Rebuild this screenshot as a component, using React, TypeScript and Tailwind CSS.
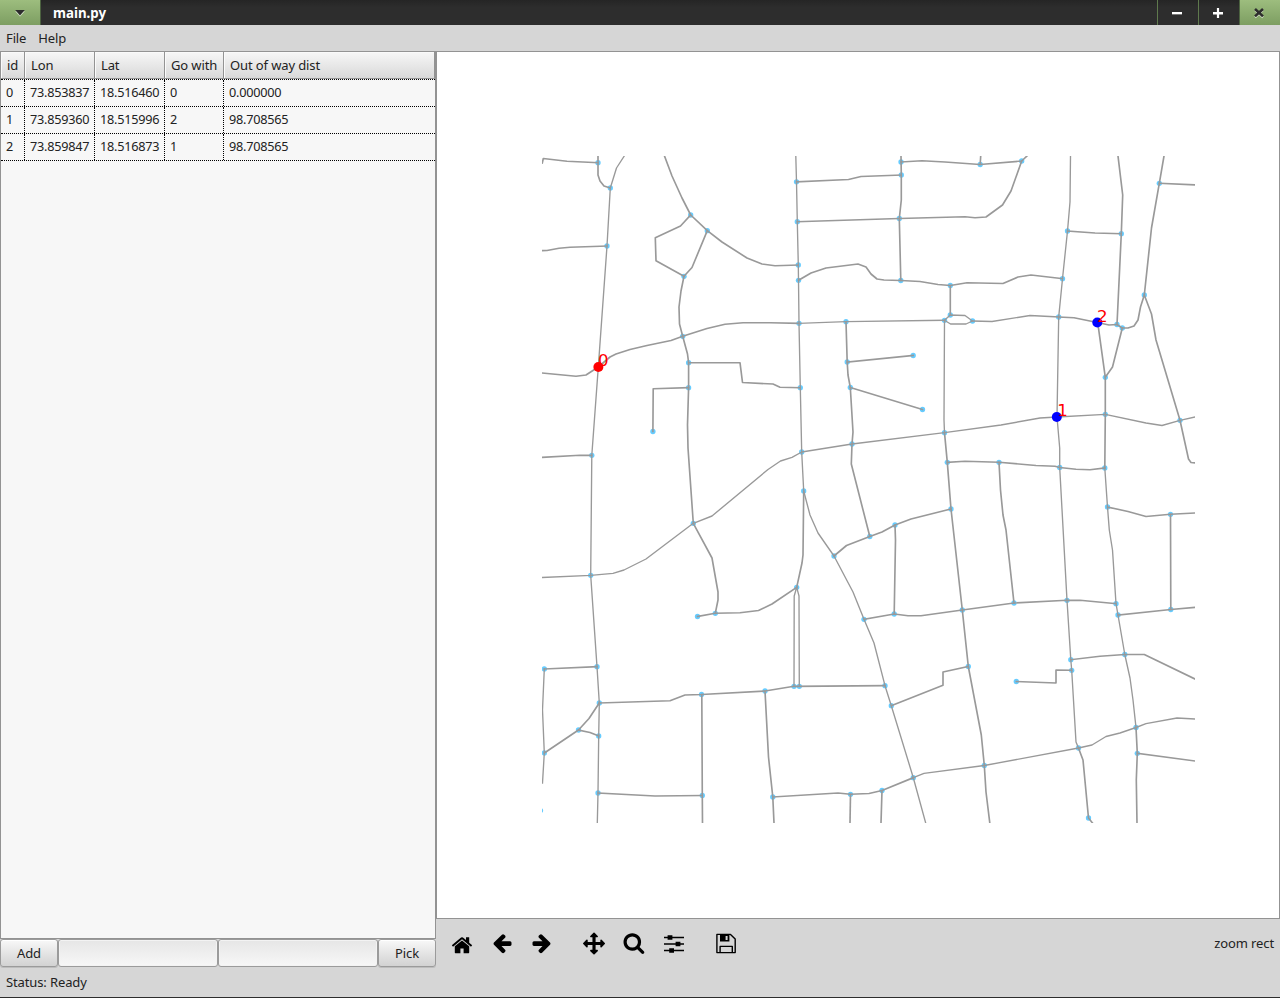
import type { ReactNode } from "react";

type Point = [number, number];

const streets: string[] = [
  "542.3,163 543.3,158.5 567,161.3 598,162.7",
  "598,156 598,175 600,181 604,186 610.3,188",
  "542,250.7 547,250.5 559,248.3 570,247.3 607,246",
  "542,373 576,376.3 586,375 598.3,367 610,357 616,354 630,349.5 647,345.5 671,340.5 682.7,336.3 707,328.5 725,324.3 743,322.8 770,322.7 799,323.3",
  "664.5,156 672,176 682,198 690.7,215 707.3,230.7 722,242 747,258 762,264 775,265.7 798.3,265",
  "690.7,215 680.5,226 655.3,237.7 656,260.7 684,276.3 692,267.5 707.3,230.7",
  "684,276.3 681,291 679,307 679.5,324 682.7,336.3 687.5,354 688.6,362.7 688.6,387.7 687.5,425 688,448 693.3,523.3 712,558 718,592 718,600 715.3,613.3",
  "688.6,362.7 740,362.7 742.5,382.5 773,384 780,387.3 800.3,387.7",
  "688.6,387.7 653.2,388.7 652.9,431.5",
  "542,457.3 580,455.3 591.8,455.3",
  "803.7,491 803,555 802,563 796.7,587.3",
  "796.7,587.3 772,604 758.5,610.5 740,612.7 715.3,613.3 697.5,616.5",
  "796.5,181.8 848.5,179.5 861,176.5 901.3,175",
  "901,156 901.3,175 901.3,200 899.3,218.5 900.8,280.5",
  "901,162 922,160.7 945,162 980,164.5 1021.7,161 1027,156",
  "980.7,156 980.2,164.5",
  "1021.7,161 1011,191 1002.5,205 986,217 975,217.7 965,216.7 899.3,218.5 797.3,221.7",
  "798.5,280.3 811,273 826,268 858,264 866,267 871,274 877,279 884,280 900.8,280.5 920,281.5 938,284.5 950.3,285.5 967,282.8 1003,283.5 1018,277 1031,275 1062.5,278.7",
  "950.3,285.5 950.3,315",
  "1058.7,317 1074,317.8 1097.3,322.5 1109,325 1117,324.5 1122.3,328",
  "846,321.7 847.2,362 848,375 850.3,387.5 853,432 852,444 851.3,464 869.8,536.5",
  "847.2,362 913.2,355.5",
  "850.3,387.5 922.5,409.5",
  "944.5,432.7 947.3,462.3 951,509 962.3,610 968.3,666.5 981.3,735 984.3,765.5 986,792 989.8,823",
  "1067.5,231 1095,233 1121.3,233.7",
  "1118,156 1122.7,195 1121.3,233.7 1117,324.5",
  "1164,156 1159.3,183.3 1151.5,228 1144.3,295 1140.5,307 1138,320 1134,326 1128,328 1122.3,328 1112.5,367 1105.3,377.3 1097.7,322.5",
  "1159.3,183.3 1195,184.8",
  "1144.3,295 1151.5,314 1156,340 1180,420.3 1188.5,459 1191,462.5 1195,462.8",
  "1105.3,377.3 1105.3,414.3 1104.8,468",
  "947.3,462.3 965,461.2 999,462.3 1036,465.5 1055,466.3 1059.7,467.5 1076,469.3 1090,469.7 1104.8,468",
  "999,462.3 1000.5,490 1003,515 1006,530 1014,603",
  "834,556 846.5,545.5 869.8,536.5 882,532 895,525 911,519 951,509",
  "895,525 895.5,540 894.2,614",
  "864,619.3 894.2,614 908,615.7 921,615.7 962.3,610 1014,603 1067,600.3 1080,600.3 1116,603.7",
  "1107.5,507 1128,511.5 1146,516.5 1170.5,514.3 1195,513",
  "1170.5,514.3 1170.8,609.5",
  "1118,615 1170.8,609.5 1195,607.3",
  "1070.8,659.7 1100,656.3 1124.8,654.5 1144.3,654.5 1195,679",
  "1071.7,670.3 1056,670 1056,683 1016.3,681.5",
  "968.3,666.5 943,672 943,685.3 891.3,705.7",
  "599.3,703 670,700.7 685,695 701.5,694.5 765,691 794,686.3 885,685.7",
  "772.8,797 838,793 850.5,794.3 869,793.5 882,790.5 913.3,777.7",
  "1137.3,753.3 1195,761",
  "850.5,794.3 850,823",
  "882,790.5 881,823",
  "544.3,669 597,666.7",
  "544.3,753 578.5,730 589,718.5 599.3,703",
  "578.5,730 590,732.5 598.7,736",
  "701.8,694.5 702.3,795.5 702.5,823",
  "598,793 655,796 702.3,795.5",
  "765,691 768.5,757 772.8,797 774,823",
  "1078.5,748 1083,760 1088.5,818 1092.5,823",
  "1136,727.5 1137.3,753.3 1136.3,780 1137,823",
];

const oneWays: string[] = [
  "624.3,156 616.5,168 610.3,188 607,246 598.3,367 591.8,455.3 590.7,575.3 597,666.7 599.3,703 598.7,736 598,793 597.3,823",
  "799,323.3 846,321.7 944.5,320.3",
  "795.8,156 796.5,181.8 797.3,221.7 798.3,265 798.5,280.3 799,323.3 800.3,387.7 801.7,452 803.7,491 810,515 818,533 834,556 853,592 864,619.3 874,643 885,685.7 891.3,705.7 913.3,777.7 925.7,823",
  "542,577.5 590.7,575.3 613,573.3 624,570 646,559 693.3,523.3 712,516 768,469.5 780.5,461 792,457.3 801.7,452 852,444 944.5,432.7 1001,425 1040,418 1057,417 1105.3,414.3 1146,423 1162,425.5 1180,420.3 1195,417",
  "796.7,587.3 794.2,596 794,686.3",
  "796.7,587.3 799,596 799.3,686.3",
  "950.3,315 944.5,320.3 950.5,324 966,324 972.5,321 965,315.5 950.3,315",
  "972.5,321 992,321.5 1030,315.5 1058.7,317",
  "944.5,320.3 944,420 944.5,432.7",
  "1070.5,156 1070,202 1067.5,231 1062.5,278.7 1058.7,317 1057,417 1059.7,448 1059.7,467.5 1067,600.3 1070.8,659.7 1071.7,670.3 1076,742 1078.5,748",
  "1104.8,468 1107.5,507 1109.3,530 1112.5,550 1116,603.7 1118,615 1124.8,654.5 1130,678 1133,700 1136,727.5",
  "913.3,777.7 924,773.3 984.3,765.5 1078.5,748 1092,745 1106,736.5 1120,733 1136,727.5 1146,723.7 1177,718 1195,719",
  "544.3,669 542.5,710 544.3,753 542.5,783",
];

const nodes: Point[] = [
  [598, 162.7], [610.3, 188], [607, 246], [591.8, 455.3], [590.7, 575.3], [597, 666.7],
  [599.3, 703], [598.7, 736], [598, 793], [690.7, 215], [707.3, 230.7], [684, 276.3],
  [682.7, 336.3], [688.6, 362.7], [688.6, 387.7], [652.9, 431.5], [693.3, 523.3],
  [715.3, 613.3], [697.5, 616.5], [796.5, 181.8], [797.3, 221.7], [798.3, 265],
  [798.5, 280.3], [799, 323.3], [800.3, 387.7], [801.7, 452], [803.7, 491], [796.7, 587.3],
  [901, 162], [901.3, 175], [899.3, 218.5], [900.8, 280.5], [980.2, 164.5], [1021.7, 161],
  [950.3, 285.5], [950.3, 315], [944.5, 320.3], [972.5, 321], [846, 321.7], [847.2, 362],
  [850.3, 387.5], [852, 444], [869.8, 536.5], [913.2, 355.5], [922.5, 409.5],
  [944.5, 432.7], [947.3, 462.3], [951, 509], [962.3, 610], [968.3, 666.5], [984.3, 765.5],
  [1067.5, 231], [1062.5, 278.7], [1058.7, 317], [1121.3, 233.7], [1117, 324.5],
  [1122.3, 328], [1159.3, 183.3], [1144.3, 295], [1105.3, 377.3], [1105.3, 414.3],
  [1180, 420.3], [1104.8, 468], [1059.7, 467.5], [999, 462.3], [1107.5, 507],
  [1170.5, 514.3], [1170.8, 609.5], [1116, 603.7], [1118, 615], [1067, 600.3], [1014, 603],
  [834, 556], [895, 525], [894.2, 614], [864, 619.3], [1070.8, 659.7], [1071.7, 670.3],
  [1124.8, 654.5], [1016.3, 681.5], [794, 686.3], [799.3, 686.3], [885, 685.7],
  [891.3, 705.7], [913.3, 777.7], [882, 790.5], [850.5, 794.3], [772.8, 797], [765, 691],
  [701.5, 694.5], [702.3, 795.5], [544.3, 669], [544.3, 753], [578.5, 730], [540.5, 810.5],
  [1078.5, 748], [1136, 727.5], [1137.3, 753.3], [1088.5, 818],
];

const stops = [
  { label: "0", x: 598.4, y: 367, tx: 598.1, ty: 366.4, color: "#ff0000" },
  { label: "1", x: 1056.8, y: 417, tx: 1057.3, ty: 416.4, color: "#0000ff" },
  { label: "2", x: 1097.3, y: 322.5, tx: 1097, ty: 322.4, color: "#0000ff" },
];

function StreetMap() {
  return (
    <svg width="653" height="667" viewBox="542 156 653 667" className="block overflow-hidden">
      <g fill="#66ccff">
        {nodes.map(([x, y]) => (
          <circle key={`${x},${y}`} cx={x} cy={y} r="2.65" />
        ))}
      </g>
      <g fill="none" stroke="#999999" strokeLinejoin="round" strokeLinecap="square">
        {streets.map((points) => (
          <polyline key={points} points={points} strokeWidth="1.65" />
        ))}
        {oneWays.map((points) => (
          <polyline key={points} points={points} strokeWidth="1.35" />
        ))}
      </g>
      {stops.map((s) => (
        <g key={s.label}>
          <circle cx={s.x} cy={s.y} r="5" fill={s.color} />
          <text x={s.tx} y={s.ty} fill="#ff0000" fontSize="16.67" fontFamily="DejaVu Sans, sans-serif">
            {s.label}
          </text>
        </g>
      ))}
    </svg>
  );
}

const HOME =
  "M1472 992v480q0 26-19 45t-45 19h-384v-384h-256v384h-384q-26 0-45-19t-19-45v-480q0-1 .5-3t.5-3l575-474 575 474q1 2 1 6zm223-69l-62 74q-8 9-21 11h-3q-13 0-21-7l-692-577-692 577q-12 8-24 7-13-2-21-11l-62-74q-8-10-7-23.5t11-21.5l719-599q32-26 76-26t76 26l244 204v-195q0-14 9-23t23-9h192q14 0 23 9t9 23v408l219 182q10 8 11 21.5t-7 23.5z";
const ARROW =
  "M1664 896v128q0 53-32.5 90.5t-84.5 37.5h-704l293 294q38 36 38 90t-38 90l-75 76q-37 37-90 37-52 0-91-37l-651-652q-37-37-37-90 0-52 37-91l651-650q38-38 91-38 52 0 90 38l75 74q38 38 38 91t-38 91l-293 293h704q52 0 84.5 37.5t32.5 90.5z";
const MOVE =
  "M1792 896q0 26-19 45l-256 256q-19 19-45 19t-45-19-19-45v-128h-384v384h128q26 0 45 19t19 45-19 45l-256 256q-19 19-45 19t-45-19l-256-256q-19-19-19-45t19-45 45-19h128v-384h-384v128q0 26-19 45t-45 19-45-19l-256-256q-19-19-19-45t19-45l256-256q19-19 45-19t45 19 19 45v128h384v-384h-128q-26 0-45-19t-19-45 19-45l256-256q19-19 45-19t45 19l256 256q19 19 19 45t-19 45-45 19h-128v384h384v-128q0-26 19-45t45-19 45 19l256 256q19 19 19 45z";
const SEARCH =
  "M1216 832q0-185-131.5-316.5t-316.5-131.5-316.5 131.5-131.5 316.5 131.5 316.5 316.5 131.5 316.5-131.5 131.5-316.5zm512 832q0 52-38 90t-90 38q-54 0-90-38l-343-342q-179 124-399 124-143 0-273.5-55.5t-225-150-150-225-55.5-273.5 55.5-273.5 150-225 225-150 273.5-55.5 273.5 55.5 225 150 150 225 55.5 273.5q0 220-124 399l343 343q37 37 37 90z";

function Tool({ children, label }: { children: ReactNode; label: string }) {
  return (
    <button aria-label={label} className="flex h-10 w-10 items-center justify-center">
      <svg width="24" height="24" viewBox="0 0 24 24">
        {children}
      </svg>
    </button>
  );
}

function Toolbar() {
  return (
    <div className="flex h-[50px] items-center px-1.5">
      <Tool label="Home">
        <path d={HOME} transform="translate(0.8 2) scale(0.0125)" />
      </Tool>
      <Tool label="Back">
        <path d={ARROW} transform="translate(1.2 0) scale(0.0122)" />
      </Tool>
      <Tool label="Forward">
        <path d={ARROW} transform="translate(22.8 0) scale(-0.0122 0.0122)" />
      </Tool>
      <div className="w-3" />
      <Tool label="Pan">
        <path d={MOVE} transform="translate(1 0.5) scale(0.0123)" />
      </Tool>
      <Tool label="Zoom">
        <path d={SEARCH} transform="translate(0.7 -0.4) scale(0.0125)" />
      </Tool>
      <Tool label="Subplots">
        <path d="M2 5.5h20M2 12h20M2 18.5h20" stroke="black" strokeWidth="1.4" />
        <path d="M5.6 3.2h4.8v4.6H5.6zM13.6 9.7h4.8v4.6h-4.8zM7.2 16.2H12v4.6H7.2z" />
      </Tool>
      <div className="w-3" />
      <Tool label="Save">
        <path
          d="M2.9 2.4h13.6l4.7 4.7v13.5H2.9zM6.1 20.4v-6h12.2v6"
          fill="none"
          stroke="black"
          strokeWidth="1.4"
          strokeLinejoin="round"
        />
        <path d="M6 2.5h9.4v7H6zM11.6 4v4h2V4z" fillRule="evenodd" />
      </Tool>
      <span className="-mt-0.5 ml-auto">zoom rect</span>
    </div>
  );
}

const columns = ["id", "Lon", "Lat", "Go with", "Out of way dist"];
const rows = [
  ["0", "73.853837", "18.516460", "0", "0.000000"],
  ["1", "73.859360", "18.515996", "2", "98.708565"],
  ["2", "73.859847", "18.516873", "1", "98.708565"],
];

function StopsTable() {
  return (
    <div className="h-[888px] border border-[#939393] bg-[#f7f7f7]">
      <div className="grid h-[27px] grid-cols-[24px_70px_70px_59px_1fr] border-b border-[#939393]">
        {columns.map((c) => (
          <div
            key={c}
            className="flex items-center whitespace-nowrap border-r border-[#939393] bg-linear-to-b from-[#f7f7f7] to-[#d9d9d9] pl-1.5 shadow-[inset_1px_1px_0_#fafafa]"
          >
            {c}
          </div>
        ))}
      </div>
      <div className="border-t border-dotted border-black">
        {rows.map((r) => (
          <div
            key={r[0]}
            className="grid h-[27px] grid-cols-[24px_70px_70px_59px_1fr] border-b border-dotted border-black"
          >
            {r.map((v, i) => (
              <div
                key={i}
                className="flex items-center whitespace-nowrap border-r border-dotted border-black pb-0.5 pl-[5px] text-[12.7px] tracking-[-0.25px] last:border-r-0"
              >
                {v}
              </div>
            ))}
          </div>
        ))}
      </div>
    </div>
  );
}

function PushButton({ children }: { children: ReactNode }) {
  return (
    <button className="h-7 w-[58px] rounded-[3px] border border-[#9b9b9b] bg-linear-to-b from-[#f8f8f8] to-[#d2d2d2] shadow-[inset_0_1px_0_#ffffff,0_1px_0_#bdbdbd]">
      {children}
    </button>
  );
}

function Entry() {
  return (
    <input className="h-7 w-40 rounded-[3px] border border-[#9b9b9b] bg-linear-to-b from-[#e6e6e6] to-[#f7f7f7] px-1.5 shadow-[inset_0_0_0_1px_#f3f3f3] outline-none" />
  );
}

function TitleBar() {
  return (
    <header className="flex h-[25px] items-center bg-linear-to-b from-[#252525] via-[#2d2d2d] via-30% to-[#2d2d2d] text-white">
      <div className="flex h-full w-[41px] items-center justify-center border-r border-[#4c6240] bg-linear-to-b from-[#9dbd7e] to-[#7d9e62]">
        <svg width="12" height="8" viewBox="0 0 12 8">
          <path d="M1.2 2.2h9.6L6 7.6z" fill="#dce8d0" />
          <path d="M1.2 1h9.6L6 6.4z" fill="#2d2d2d" />
        </svg>
      </div>
      <h1 className="ml-3 text-[13.3px] font-bold tracking-normal">main.py</h1>
      <div className="ml-auto flex h-full">
        <button
          aria-label="Minimize"
          className="flex w-[41px] items-center justify-center border-l border-[#5f7a4d] pr-0.5"
        >
          <svg width="12" height="12" viewBox="0 0 12 12">
            <path d="M1 5h10v3H1z" fill="#777" />
            <path d="M1 5h10v2H1z" fill="#fff" />
          </svg>
        </button>
        <button
          aria-label="Maximize"
          className="flex w-[41px] items-center justify-center border-l border-[#5f7a4d] pr-0.5"
        >
          <svg width="12" height="12" viewBox="0 0 12 12">
            <path d="M1 5h10v2.4H1zM4.9 1h2.2v10H4.9z" fill="#fff" />
          </svg>
        </button>
        <button
          aria-label="Close"
          className="flex w-[41px] items-center justify-center border-l border-[#4c6240] bg-linear-to-b from-[#9dbd7e] to-[#7d9e62] pr-0.5"
        >
          <svg width="12" height="12" viewBox="0 0 12 12">
            <path d="M2 3l8 7.4M10 3l-8 7.4" stroke="#dce8d0" strokeWidth="2.2" />
            <path d="M2 2l8 7.4M10 2L2 9.4" stroke="#2d2d2d" strokeWidth="2.6" />
          </svg>
        </button>
      </div>
    </header>
  );
}

export default function App() {
  return (
    <div className="flex h-[998px] w-[1280px] flex-col border-b border-[#2d2d2d] bg-[#d6d6d6] font-['Noto_Sans',sans-serif] text-[13px] leading-[18px] tracking-[-0.12px] text-[#222222]">
      <TitleBar />
      <nav className="flex h-[26px] items-center gap-3 px-1.5">
        <span>File</span>
        <span>Help</span>
      </nav>
      <main className="flex h-[918px]">
        <section className="w-[436px]">
          <StopsTable />
          <div className="flex">
            <PushButton>Add</PushButton>
            <Entry />
            <Entry />
            <PushButton>Pick</PushButton>
          </div>
        </section>
        <section className="flex-1">
          <div className="h-[868px] border border-[#939393] bg-white pl-[105px] pt-[104px]">
            <StreetMap />
          </div>
          <Toolbar />
        </section>
      </main>
      <footer className="-mt-0.5 flex h-[30px] items-center px-1.5">Status: Ready</footer>
    </div>
  );
}
